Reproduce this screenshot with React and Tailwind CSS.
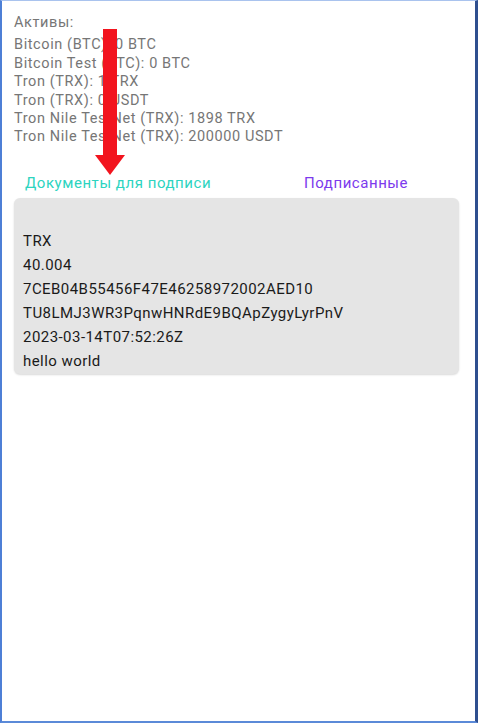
import React from 'react';

const assets = [
    'Bitcoin (BTC): 0 BTC',
    'Bitcoin Test (BTC): 0 BTC',
    'Tron (TRX): 1 TRX',
    'Tron (TRX): 0 USDT',
    'Tron Nile TestNet (TRX): 1898 TRX',
    'Tron Nile TestNet (TRX): 200000 USDT',
];

const doc = [
    'TRX',
    '40.004',
    '7CEB04B55456F47E46258972002AED10',
    'TU8LMJ3WR3PqnwHNRdE9BQApZygyLyrPnV',
    '2023-03-14T07:52:26Z',
    'hello world',
];

export default function App() {
    return (
        <div className="w-[478px] h-[726px] bg-white" style={{ fontFamily: 'Roboto, "Noto Sans", sans-serif' }}>
            <div className="relative w-[478px] h-[723px] border-l-2 border-t border-r-[3px] border-b-2 border-l-[#4d7fd6] border-t-[#a9c3ee] border-r-[#2f4f8f] border-b-[#5b8ad8]">
                {/* Assets */}
                <div className="pl-3 pt-[13px] text-[14.5px] leading-[18.4px] tracking-[0.6px] text-[#767676]">
                    <div className="mb-[4px]">Активы:</div>
                    {assets.map((a) => (
                        <div key={a}>{a}</div>
                    ))}
                </div>

                {/* Tabs */}
                <div className="flex items-center mt-[27px] text-[15px] leading-[18px] tracking-[0.55px]">
                    <div className="pl-[23px] w-[302px] text-[#2dd4bf]">Документы для подписи</div>
                    <div className="text-[#7c3aed]">Подписанные</div>
                </div>

                {/* Document card */}
                <div className="ml-3 mr-[16px] mt-[6px] h-[176px] rounded-md bg-[#e5e5e5] shadow-[0_1px_2px_rgba(0,0,0,0.15)] px-[9px] pt-[31px] text-[15px] leading-[24px] tracking-[0.45px] text-[#1a1a1a]">
                    {doc.map((d) => (
                        <div key={d}>{d}</div>
                    ))}
                </div>

                {/* Red arrow annotation */}
                <svg className="absolute left-[91px] top-[28px]" width="34" height="148" viewBox="0 0 34 148">
                    <path d="M10 0 H24 V126 H32 L17 146 L2 126 H10 Z" fill="#f2141e" />
                </svg>
            </div>
        </div>
    );
}
